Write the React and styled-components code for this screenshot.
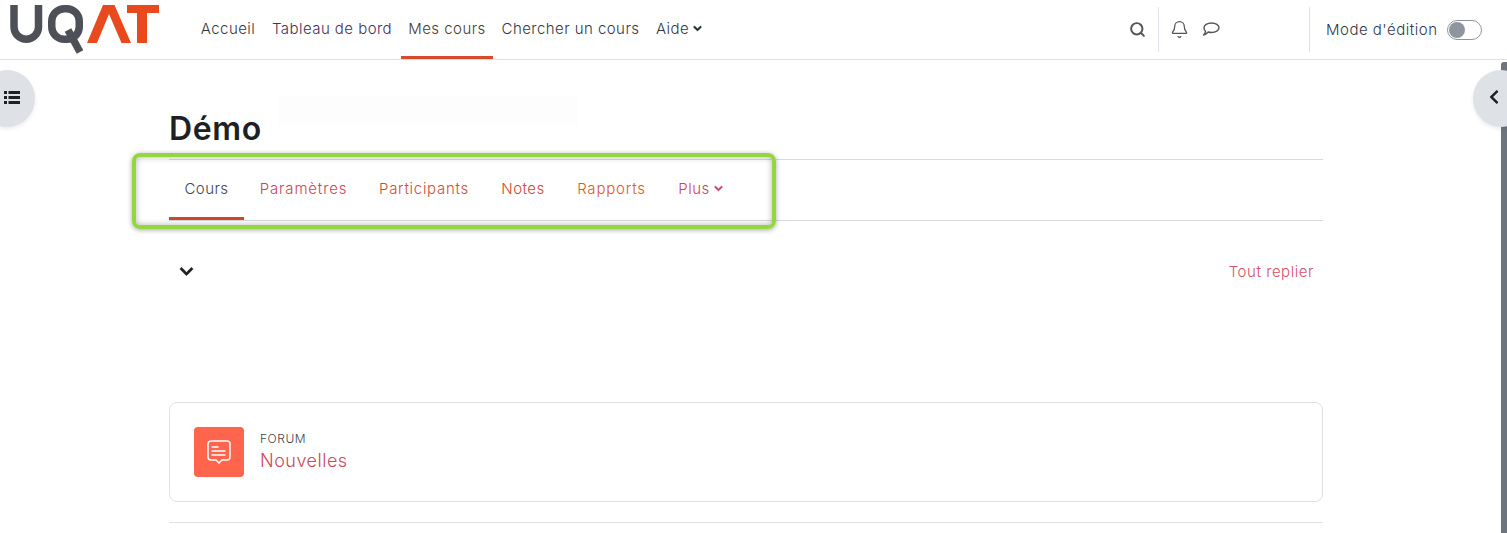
import React from "react"
import styled, { createGlobalStyle } from "styled-components"
import { FaChevronDown, FaChevronLeft } from "react-icons/fa"
import { Search, Bell } from "lucide-react"

const GlobalStyle = createGlobalStyle`
  html, body {
    margin: 0;
    height: 100%;
    overflow: hidden;
    background: #fff;
    font-family: Inter, "Liberation Sans", sans-serif;
    font-weight: 300;
  }
`

const Page = styled.div`
  position: relative;
  height: 533px;
  overflow: hidden;
`

const Navbar = styled.header`
  display: flex;
  align-items: stretch;
  height: 59px;
  padding-left: 10px;
  border-bottom: 1px solid #e0e0e1;
`

const LogoWrap = styled.div`
  width: 150px;
  margin-right: 33px;
  svg {
    display: block;
  }
`

const NavList = styled.nav`
  display: flex;
`

const NavItem = styled.a`
  display: flex;
  align-items: center;
  justify-content: center;
  gap: 4px;
  width: ${p => p.$width}px;
  height: 59px;
  box-sizing: border-box;
  font-size: 15px;
  letter-spacing: 0.45px;
  white-space: nowrap;
  color: ${p => p.$color || "#33383f"};
  border-bottom: 3px solid ${p => (p.$active ? "#d9492a" : "transparent")};
  svg {
    font-size: 9px;
    color: #1d2125;
    stroke: currentColor;
    stroke-width: 40px;
  }
`

const NavRight = styled.div`
  display: flex;
  align-items: center;
  margin-left: auto;
  padding-right: 25px;
`

const IconButton = styled.span`
  display: flex;
  justify-content: center;
  width: ${p => p.$width}px;
  color: #555;
`

const Divider = styled.span`
  width: 1px;
  height: 45px;
  background: #dfe2e6;
`

const EditLabel = styled.span`
  width: 113px;
  margin: 0 8px 0 16px;
  font-size: 15px;
  letter-spacing: 0.5px;
  white-space: nowrap;
  color: #2f3a48;
`

const Switch = styled.span`
  display: flex;
  align-items: center;
  width: 35px;
  height: 20px;
  box-sizing: border-box;
  padding: 1px;
  border: 1px solid #8f959e;
  border-radius: 10px;
  &::before {
    content: "";
    width: 16px;
    height: 16px;
    border-radius: 50%;
    background: #8f959e;
  }
`

const Drawer = styled.button`
  position: absolute;
  top: 70px;
  ${p => (p.$side === "left" ? "left: -21px;" : "right: -22px;")}
  display: flex;
  align-items: center;
  justify-content: ${p => (p.$side === "left" ? "flex-end" : "flex-start")};
  width: 56px;
  height: 57px;
  padding: ${p => (p.$side === "left" ? "0 15px 3px 0" : "0 0 3px 13px")};
  border: 0;
  border-radius: 50%;
  background: #dee2e6;
  box-shadow: 0 2px 4px rgba(0, 0, 0, 0.08);
  color: #1d2125;
  font-size: 16px;
`

const Scrollbar = styled.div`
  position: absolute;
  top: 62px;
  right: 0;
  bottom: 0;
  width: 6px;
  border-radius: 3px 0 0 0;
  background: #6d747d;
`

const Main = styled.main`
  width: 1154px;
  margin-left: 169px;
`

const CourseHeader = styled.div`
  position: relative;
  display: flex;
  align-items: center;
  height: 99px;
  padding-top: 37px;
  box-sizing: border-box;
`

const Title = styled.h1`
  margin: 0;
  font-size: 32px;
  font-weight: 600;
  letter-spacing: 0.6px;
  color: #1d2125;
`

const FaintPatch = styled.div`
  position: absolute;
  top: 36px;
  left: 109px;
  width: 300px;
  height: 29px;
  background: #fdfdfd;
`

const Tabs = styled.nav`
  display: flex;
  height: 60px;
  border-top: 1px solid #d8dade;
  border-bottom: 1px solid #d8dade;
`

const Tab = styled.a`
  display: flex;
  align-items: center;
  justify-content: center;
  gap: 4px;
  width: ${p => p.$width}px;
  box-sizing: border-box;
  padding-bottom: 1px;
  font-size: 15px;
  letter-spacing: ${p => p.$spacing || 0.45}px;
  white-space: nowrap;
  color: ${p => p.$color};
  border-bottom: 3px solid ${p => (p.$active ? "#cc4a2c" : "transparent")};
  svg {
    font-size: 9px;
    stroke: currentColor;
    stroke-width: 40px;
  }
`

const Highlight = styled.div`
  position: absolute;
  top: 153px;
  left: 132px;
  width: 644px;
  height: 76px;
  box-sizing: border-box;
  border: 4px solid #93d63f;
  border-radius: 8px;
  box-shadow: 0 1px 5px rgba(0, 0, 0, 0.35), inset 0 0 6px rgba(0, 0, 0, 0.3);
  pointer-events: none;
`

const SectionBar = styled.div`
  display: flex;
  align-items: center;
  justify-content: space-between;
  height: 102px;
  padding: 0 9px 1px 10px;
  box-sizing: border-box;
  font-size: 15px;
  svg {
    font-size: 15px;
    color: #1d2125;
    stroke: currentColor;
    stroke-width: 20px;
  }
`

const CollapseLink = styled.a`
  letter-spacing: 0.55px;
  color: #d4506a;
`

const ActivityCard = styled.div`
  display: flex;
  align-items: center;
  gap: 16px;
  height: 100px;
  margin-top: 79px;
  box-sizing: border-box;
  padding: 0 24px;
  border: 1px solid #dee2e6;
  border-radius: 8px;
`

const ActivityIcon = styled.div`
  display: flex;
  align-items: center;
  justify-content: center;
  width: 50px;
  height: 50px;
  border-radius: 4px;
  background: #ff644d;
`

const ActivityType = styled.div`
  padding-top: 2px;
  font-size: 12px;
  line-height: 16px;
  letter-spacing: 0.55px;
  color: #3f444d;
`

const ActivityName = styled.a`
  display: block;
  font-size: 18px;
  line-height: 28px;
  letter-spacing: 0.5px;
  color: #c94a5c;
`

const BottomRule = styled.hr`
  margin: 20px 0 0;
  border: 0;
  border-top: 1px solid #dee2e6;
`

const Logo = () => (
  <svg width="150" height="59" viewBox="0 0 150 59" role="img" aria-label="UQAT">
    <g fill="none" stroke="#4d5157" strokeWidth="7.5">
      <path d="M4 5V27a12 12 0 0 0 24.500 0V5" />
      <rect x="41.750" y="8.750" width="27.500" height="30.500" rx="12.500" />
      <path d="M58 30L70 52" />
    </g>
    <path d="M77 43L93 5H104.500L121 43H111.500L99 14L87 43Z" fill="#e8491d" />
    <path d="M117 5H149V13H137V43H127V13H117Z" fill="#e8491d" />
  </svg>
)

const ListIcon = () => (
  <svg width="16" height="13" viewBox="0 0 16 13" fill="currentColor">
    <path d="M0 0h3v3H0zM4.500 0H16v3H4.500zM0 5h3v3H0zM4.500 5H16v3H4.500zM0 10h3v3H0zM4.500 10H16v3H4.500z" />
  </svg>
)

const ChatBubble = () => (
  <svg width="18" height="15" viewBox="0 0 18 15" fill="none" stroke="#555" strokeWidth="1.4" strokeLinejoin="round">
    <path d="M9.500 1C13.700 1 17 3.100 17 5.800S13.700 10.500 9.500 10.500C8.300 10.500 7.200 10.300 6.200 10 5 11.400 3.300 12.500 1.600 13 2.600 12 3.300 10.800 3.500 9.300 2.500 8.400 2 7.200 2 5.800 2 3.100 5.300 1 9.500 1Z" />
  </svg>
)

const ForumIcon = () => (
  <svg width="24" height="25" viewBox="0 0 24 25" fill="none" stroke="#fff" strokeWidth="1.5" strokeLinecap="round">
    <path d="M4 1h16a3 3 0 0 1 3 3v13a3 3 0 0 1-3 3h-5l-3 3-3-3H4a3 3 0 0 1-3-3V4a3 3 0 0 1 3-3z" />
    <path d="M5 7h6M5 11h13M5 15h13" />
  </svg>
)

const navLinks = [
  { label: "Accueil", width: 70 },
  { label: "Tableau de bord", width: 138, color: "#46305a" },
  { label: "Mes cours", width: 92, active: true, color: "#4a3a30" },
  { label: "Chercher un cours", width: 155 },
]

const courseTabs = [
  { label: "Cours", width: 75, color: "#3f4750", active: true },
  { label: "Paramètres", width: 119, spacing: 0.85, color: "#c9455a" },
  { label: "Participants", width: 122, spacing: 0.7, color: "#c94f38" },
  { label: "Notes", width: 76, color: "#cc4a28" },
  { label: "Rapports", width: 101, spacing: 0.8, color: "#d85a26" },
]

export default function App() {
  return (
    <Page>
      <GlobalStyle />
      <Navbar>
        <LogoWrap>
          <Logo />
        </LogoWrap>
        <NavList>
          {navLinks.map(link => (
            <NavItem key={link.label} $width={link.width} $active={link.active} $color={link.color}>
              {link.label}
            </NavItem>
          ))}
          <NavItem $width={62}>
            Aide <FaChevronDown />
          </NavItem>
        </NavList>
        <NavRight>
          <IconButton $width={42}>
            <Search size={17} strokeWidth={2.8} />
          </IconButton>
          <Divider />
          <IconButton $width={40}>
            <Bell size={19} strokeWidth={1.6} />
          </IconButton>
          <IconButton $width={24}>
            <ChatBubble />
          </IconButton>
          <IconButton $width={86} />
          <Divider />
          <EditLabel>Mode d'édition</EditLabel>
          <Switch />
        </NavRight>
      </Navbar>

      <Main>
        <CourseHeader>
          <FaintPatch />
          <Title>Démo</Title>
        </CourseHeader>
        <Tabs>
          {courseTabs.map(tab => (
            <Tab key={tab.label} $width={tab.width} $spacing={tab.spacing} $color={tab.color} $active={tab.active}>
              {tab.label}
            </Tab>
          ))}
          <Tab $width={77} $color="#cc3f62">
            Plus <FaChevronDown />
          </Tab>
        </Tabs>
        <SectionBar>
          <FaChevronDown />
          <CollapseLink>Tout replier</CollapseLink>
        </SectionBar>
        <ActivityCard>
          <ActivityIcon>
            <ForumIcon />
          </ActivityIcon>
          <div>
            <ActivityType>FORUM</ActivityType>
            <ActivityName>Nouvelles</ActivityName>
          </div>
        </ActivityCard>
        <BottomRule />
      </Main>

      <Highlight />
      <Scrollbar />
      <Drawer $side="left" aria-label="Index">
        <ListIcon />
      </Drawer>
      <Drawer $side="right" aria-label="Blocs">
        <FaChevronLeft />
      </Drawer>
    </Page>
  )
}
